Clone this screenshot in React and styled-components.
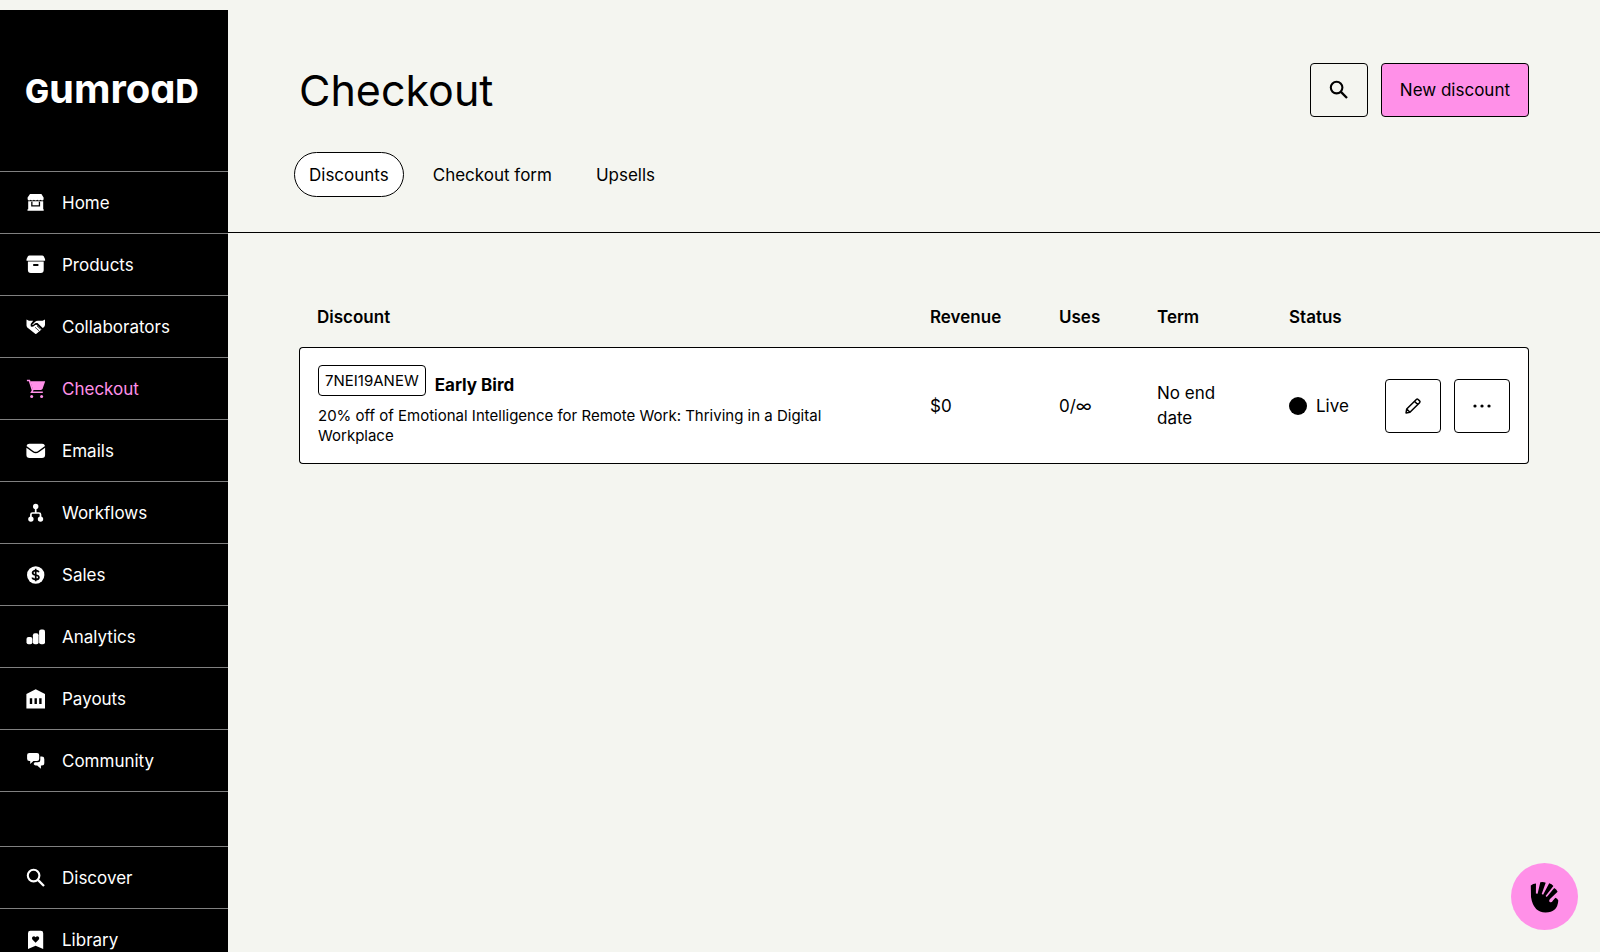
import React from 'react';
import styled, { createGlobalStyle } from 'styled-components';

const GlobalStyle = createGlobalStyle`
  * {
    box-sizing: border-box;
  }

  body {
    margin: 0;
    background: #f4f5f0;
    color: #000;
    font-family: Inter, "Liberation Sans", sans-serif;
    font-size: 17px;
    line-height: 26px;
  }

  button {
    font: inherit;
    color: inherit;
    cursor: pointer;
  }
`;

const Page = styled.div`
  display: flex;
  min-height: 100vh;
`;

const Sidebar = styled.nav`
  position: sticky;
  top: 10px;
  flex: 0 0 228px;
  height: calc(100vh - 10px);
  margin-top: 10px;
  overflow: hidden;
  background: #000;
  color: #fff;
`;

const Logo = styled.a`
  display: flex;
  align-items: center;
  height: 161px;
  padding: 0 25px;
  color: inherit;
  font-size: 40px;
  font-weight: 700;
  line-height: 40px;
  font-feature-settings: "cv11";
  text-decoration: none;
`;

const SmallCap = styled.span`
  font-size: 32px;
  font-weight: 800;
`;

const NavList = styled.ul`
  margin: 0 0 54px;
  padding: 0;
  border-bottom: 1px solid #808080;
  list-style: none;
`;

const NavLink = styled.a`
  display: flex;
  align-items: center;
  gap: 16px;
  height: 62px;
  padding: 0 26px;
  border-top: 1px solid #808080;
  color: ${props => (props.$active ? '#ff90e8' : '#fff')};
  text-decoration: none;
`;

const Main = styled.main`
  flex: 1;
  min-width: 0;
`;

const Header = styled.header`
  display: flex;
  flex-direction: column;
  gap: 35px;
  padding: 63px 71px 35px;
  border-bottom: 1px solid #000;
`;

const TitleRow = styled.div`
  display: flex;
  align-items: center;
  justify-content: space-between;
`;

const Title = styled.h1`
  margin: 0;
  font-size: 43px;
  font-weight: 400;
  line-height: 54px;
`;

const Actions = styled.div`
  display: flex;
  gap: 13px;
`;

const Button = styled.button`
  display: flex;
  align-items: center;
  justify-content: center;
  min-width: 56px;
  height: 54px;
  padding: 0 18px;
  border: 1px solid #000;
  border-radius: 4px;
  background: ${props => (props.$accent ? '#ff90e8' : 'transparent')};
`;

const Tabs = styled.div`
  display: flex;
  gap: 14px;
  margin-left: -5px;
`;

const Tab = styled.a`
  padding: 9px 14px 8px;
  border: 1px solid ${props => (props.$active ? '#000' : 'transparent')};
  border-radius: 23px;
  background: ${props => (props.$active ? '#fff' : 'transparent')};
  color: inherit;
  text-decoration: none;
`;

const Content = styled.section`
  padding: 71px;
`;

const Table = styled.table`
  width: 100%;
  border-collapse: separate;
  border-spacing: 0;
  table-layout: fixed;
`;

const HeadCell = styled.th`
  width: ${props => props.$width || 'auto'};
  padding: 0 0 17px 18px;
  font-weight: 600;
  text-align: left;
`;

const Cell = styled.td`
  padding: 17px 0 17px 18px;
  border: solid #000;
  border-width: 1px 0;
  background: #fff;

  &:first-child {
    padding-right: 18px;
    border-left-width: 1px;
    border-radius: 4px 0 0 4px;
  }

  &:last-child {
    padding-right: 18px;
    border-right-width: 1px;
    border-radius: 0 4px 4px 0;
  }
`;

const Term = styled.div`
  max-width: 78px;
  line-height: 25px;
`;

const Offer = styled.div`
  display: flex;
  align-items: flex-end;
  gap: 9px;
  margin-bottom: 8px;
`;

const Code = styled.span`
  margin-bottom: 2px;
  padding: 4px 6px;
  border: 1px solid #000;
  border-radius: 4px;
  font-size: 15px;
  line-height: 21px;
`;

const Description = styled.div`
  font-size: 15px;
  line-height: 20px;
`;

const Status = styled.div`
  display: flex;
  align-items: center;
  gap: 9px;
`;

const Dot = styled.span`
  width: 18px;
  height: 18px;
  border-radius: 50%;
  background: #000;
`;

const HelpButton = styled.button`
  position: fixed;
  right: 22px;
  bottom: 22px;
  display: flex;
  align-items: center;
  justify-content: center;
  width: 67px;
  height: 67px;
  padding: 0;
  border: 0;
  border-radius: 50%;
  background: #ff90e8;
`;

const Icon = ({ size = 20, children }) => (
  <svg width={size} height={size} viewBox="0 0 20 20" fill="currentColor" aria-hidden="true">
    {children}
  </svg>
);

const icons = {
  store: (
    <>
      <path d="M4 1h11.400l2.200 3.400v1.800q-.3 1.300-1.400 1.300t-1.600-.8q-.7.800-1.700.8t-1.600-.8q-.7.800-1.700.8t-1.700-.8q-.6.800-1.600.8t-1.600-.8q-.6.800-1.600.8T1.600 6.200V4.400z" />
      <path fillRule="evenodd" d="M2.200 8.200h15v8.100h.5v1.500H1.500v-1.500h.7zM5.200 8.800v4.800h8.900V8.800h-1.300v3.400H6.500V8.800z" />
    </>
  ),
  archive: (
    <>
      <path d="M3.400.4h12.800q1 0 1.500.9l1.200 2.400q.2.500.2 1v1.100H.500V4.700q0-.5.2-1l1.200-2.400q.5-.9 1.500-.9z" />
      <path fillRule="evenodd" d="M1.900 6.500h15.800v8.600q0 2.900-2.900 2.900h-10q-2.900 0-2.900-2.900zM7.200 9v2.100h5.200V9z" />
    </>
  ),
  deal: (
    <>
      <path d="M.5 2.600 3 3.800h4.200L4.700 6.900v2.300q2.200 1.500 4.500-1.100l1.300-.4 5 4.700-5.100 4.300q-.6.500-1.200 0l-6.600-5.200Q.5 10.300.5 8.400z" />
      <path d="m19 2.600-2.400 1.200h-4.700q-1.800 0-3 1.200L6 7.900q1.100.4 2.200-.9l1.500-1h1.800l5.200 5 .8-.5q1.500-1.100 1.500-2.800z" />
      <path d="m9 10.200 4 3.600M11 9l3.600 3.300" stroke="#000" strokeWidth=".7" fill="none" />
    </>
  ),
  cart: (
    <>
      <path d="M4.200 2.200h15l-2.500 7.400q-.5 1.300-1.800 1.300H7z" />
      <path d="M.9 1.500h2.500l3.200 9.900-1 1.800h11.200" fill="none" stroke="currentColor" strokeWidth="1.600" />
      <circle cx="5.700" cy="17.400" r="1.500" />
      <circle cx="15.600" cy="17.400" r="1.500" />
    </>
  ),
  mail: (
    <>
      <path d="M3.400 2.700h12.700q2.400 0 2.900 2.200l-6.800 5q-2.400 1.800-4.900 0l-6.800-5Q1 2.700 3.400 2.700z" />
      <path d="m.4 6.700 6 4.400q3.300 2.400 6.700 0l6-4.400v7.100q0 3.200-3.200 3.200H3.600Q.4 17 .4 13.800z" />
    </>
  ),
  workflow: (
    <>
      <circle cx="9.700" cy="3.400" r="2.700" />
      <circle cx="4.900" cy="16.100" r="2.700" />
      <circle cx="14.500" cy="16.100" r="2.700" />
      <path d="M9.700 4v6M4.900 15V11.600q0-1.600 1.600-1.600h6.400q1.600 0 1.600 1.600V15" fill="none" stroke="currentColor" strokeWidth="1.700" />
    </>
  ),
  sales: (
    <>
      <circle cx="9.700" cy="10" r="8.700" />
      <path d="M12.900 7.300q-.6-1.700-3.200-1.700T6.600 7.700q0 1.900 3.100 2.300t3.200 2.400q0 2-3.200 2t-3.300-1.900M9.700 3.800v12.400" fill="none" stroke="#000" strokeWidth="1.700" />
    </>
  ),
  chart: (
    <>
      <rect x=".5" y="10" width="5.900" height="7.200" rx="2" />
      <rect x="6.900" y="6.300" width="5.700" height="10.900" rx="2" />
      <rect x="13.100" y="2.500" width="5.900" height="14.700" rx="2" />
    </>
  ),
  bank: (
    <path fillRule="evenodd" d="M9.700.2 19 5.100v14.400H.4V5.100zM3.800 9.300v5.700h2.400V9.300zm4.700 0v5.700h2.400V9.300zm4.700 0v5.700h2.400V9.300z" />
  ),
  chats: (
    <>
      <path d="M3.300 1.900h7.700q2.200 0 2.200 2.200v3.700q0 2.200-2.200 2.200H7.400l-3.200 2.900V10h-.9q-2.200 0-2.200-2.200V4.100q0-2.200 2.200-2.200z" />
      <path d="M14.300 5.500h1.500q2.500 0 2.500 2.400v4q0 2.500-2.500 2.500h-.9v3.300l-3.700-3.300H9.700q-1.500 0-2.100-1.400l1.100-1.800h3.100q2.500 0 2.500-2.500z" />
    </>
  ),
  search: (
    <>
      <circle cx="7.600" cy="7.600" r="5.800" fill="none" stroke="currentColor" strokeWidth="2.100" />
      <path d="m11.900 11.900 6.100 6.100" stroke="currentColor" strokeWidth="2.300" />
    </>
  ),
  bookmark: (
    <path fillRule="evenodd" d="M4.400.8h10.400q2.400 0 2.400 2.400v15.900l-7.600-3.300L2 19.100V3.200Q2 .8 4.400.8zM9.600 12.700l3.200-3.200q1.100-1.600-.2-2.700-1.600-1.100-3 .5-1.400-1.600-3-.5-1.300 1.100-.2 2.700z" />
  ),
  pencil: (
    <path d="m2.300 17.700.7-4.300L13.700 2.700q1-1 2 0l1.600 1.600q1 1 0 2L6.600 17zM11.600 4.800l3.600 3.600M3 13.400 6.600 17" fill="none" stroke="currentColor" strokeWidth="1.700" strokeLinejoin="round" />
  ),
  dots: (
    <>
      <circle cx="2.200" cy="10" r="1.800" />
      <circle cx="10" cy="10" r="1.800" />
      <circle cx="17.800" cy="10" r="1.800" />
    </>
  )
};

const mainLinks = [
  { label: 'Home', icon: 'store' },
  { label: 'Products', icon: 'archive' },
  { label: 'Collaborators', icon: 'deal' },
  { label: 'Checkout', icon: 'cart', active: true },
  { label: 'Emails', icon: 'mail' },
  { label: 'Workflows', icon: 'workflow' },
  { label: 'Sales', icon: 'sales' },
  { label: 'Analytics', icon: 'chart' },
  { label: 'Payouts', icon: 'bank' },
  { label: 'Community', icon: 'chats' }
];

const moreLinks = [
  { label: 'Discover', icon: 'search' },
  { label: 'Library', icon: 'bookmark' }
];

const tabs = ['Discounts', 'Checkout form', 'Upsells'];

const discounts = [
  {
    code: '7NEI19ANEW',
    name: 'Early Bird',
    description: '20% off of Emotional Intelligence for Remote Work: Thriving in a Digital Workplace',
    revenue: '$0',
    uses: '0/∞',
    term: 'No end date',
    status: 'Live'
  }
];

const Nav = ({ links }) => (
  <NavList>
    {links.map(link => (
      <li key={link.label}>
        <NavLink href="#" $active={link.active}>
          <Icon>{icons[link.icon]}</Icon>
          {link.label}
        </NavLink>
      </li>
    ))}
  </NavList>
);

const DiscountRow = ({ data }) => (
  <tr>
    <Cell>
      <Offer>
        <Code>{data.code}</Code>
        <b>{data.name}</b>
      </Offer>
      <Description>{data.description}</Description>
    </Cell>
    <Cell>{data.revenue}</Cell>
    <Cell>{data.uses}</Cell>
    <Cell><Term>{data.term}</Term></Cell>
    <Cell>
      <Status><Dot />{data.status}</Status>
    </Cell>
    <Cell>
      <Actions>
        <Button type="button" aria-label="Edit">
          <Icon>{icons.pencil}</Icon>
        </Button>
        <Button type="button" aria-label="Open discount action menu">
          <Icon size={18}>{icons.dots}</Icon>
        </Button>
      </Actions>
    </Cell>
  </tr>
);

const App = () => {
  return (
    <Page>
      <GlobalStyle />

      <Sidebar>
        <Logo href="#">
          <span><SmallCap>G</SmallCap>umroa<SmallCap>D</SmallCap></span>
        </Logo>
        <Nav links={mainLinks} />
        <Nav links={moreLinks} />
      </Sidebar>

      <Main>
        <Header>
          <TitleRow>
            <Title>Checkout</Title>
            <Actions>
              <Button type="button" aria-label="Search">
                <Icon>{icons.search}</Icon>
              </Button>
              <Button type="button" $accent>New discount</Button>
            </Actions>
          </TitleRow>
          <Tabs>
            {tabs.map((tab, i) => (
              <Tab key={tab} href="#" $active={i === 0}>{tab}</Tab>
            ))}
          </Tabs>
        </Header>

        <Content>
          <Table>
            <thead>
              <tr>
                <HeadCell>Discount</HeadCell>
                <HeadCell $width="129px">Revenue</HeadCell>
                <HeadCell $width="98px">Uses</HeadCell>
                <HeadCell $width="132px">Term</HeadCell>
                <HeadCell $width="96px">Status</HeadCell>
                <HeadCell $width="162px" aria-label="Actions" />
              </tr>
            </thead>
            <tbody>
              {discounts.map(discount => (
                <DiscountRow key={discount.code} data={discount} />
              ))}
            </tbody>
          </Table>
        </Content>
      </Main>

      <HelpButton type="button" aria-label="Help">
        <svg width="30" height="32" viewBox="0 0 30 32" aria-hidden="true">
          <path d="M1 16 .8 4.600Q3 2.500 6 2.500L5.900 12.500 7.600 12.800 10.300 1.300Q13 .4 15.700 1.800L11.700 12.900 13.100 13.700 19.200 2.200Q21.800 2.700 23.400 4.900L15.600 14.900 16.800 16 24.200 7Q26.500 8.200 27.600 10.800L20 18.100Q18.300 20.500 20.200 21.200 21.800 21.600 23 19.400L25.400 16.700Q27.500 17.200 28.300 19.500 27.500 31.500 15.500 31.500 3.500 31.500 1 16z" />
        </svg>
      </HelpButton>
    </Page>
  );
};

export default App;
